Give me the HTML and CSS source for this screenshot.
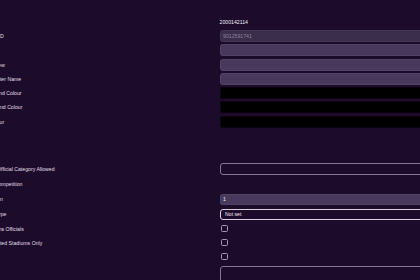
FILE: index.html
```html
<!DOCTYPE html>
<html lang="en">
<head>
    <meta charset="UTF-8">
    <meta name="viewport" content="width=device-width, initial-scale=1.0">
    <title>Edit Fixture</title>
    <link rel="stylesheet" href="styles.css">
</head>
<body>
    <form class="form">
        <!-- Identity -->
        <div class="group">
            <div class="row">
                <span class="label">Game ID</span>
                <span class="value">2000142114</span>
            </div>
            <div class="row">
                <label class="label" for="externalId">External ID</label>
                <input class="field field-muted" id="externalId" placeholder="9012591741">
            </div>
            <div class="row">
                <label class="label" for="name">Name</label>
                <input class="field" id="name">
            </div>
            <div class="row">
                <label class="label" for="view">Match View</label>
                <input class="field" id="view">
            </div>
            <div class="row">
                <label class="label" for="broadcaster">Broadcaster Name</label>
                <input class="field" id="broadcaster">
            </div>
            <div class="row">
                <span class="label">Foreground Colour</span>
                <span class="swatch"></span>
            </div>
            <div class="row">
                <span class="label">Background Colour</span>
                <span class="swatch"></span>
            </div>
            <div class="row">
                <span class="label">Text Colour</span>
                <span class="swatch"></span>
            </div>
        </div>

        <!-- Rules -->
        <div class="group group-rules">
            <div class="row row-tall">
                <label class="label" for="category">Highest Official Category Allowed</label>
                <input class="field field-outline" id="category">
            </div>
            <div class="row">
                <span class="label">Parent Competition</span>
                <span></span>
            </div>
            <div class="row">
                <label class="label" for="relegation">Relegation</label>
                <input class="field" id="relegation" value="1">
            </div>
            <div class="row">
                <label class="label" for="type">Fixture Type</label>
                <select class="field field-select" id="type">
                    <option>Not set</option>
                </select>
            </div>
            <div class="row row-check">
                <label class="label" for="extra">Allow Extra Officials</label>
                <input type="checkbox" class="check" id="extra">
            </div>
            <div class="row row-check">
                <label class="label" for="curated">Use Curated Stadiums Only</label>
                <input type="checkbox" class="check" id="curated">
            </div>
            <div class="row row-check">
                <label class="label" for="active">Active</label>
                <input type="checkbox" class="check" id="active">
            </div>
            <div class="row row-notes">
                <label class="label" for="notes">Notes</label>
                <textarea class="field field-outline" id="notes"></textarea>
            </div>
        </div>
    </form>
</body>
</html>
```

FILE: styles.css
```css
* {
    box-sizing: border-box;
}
body {
    margin: 0;
    background: #1c0b2a;
    font-family: 'Liberation Sans', Arial, sans-serif;
    font-size: 5.2px;
    color: #e6dfee;
    overflow: hidden;
}
.form {
    width: 640px;
    margin-left: -22px;
    padding-top: 15.7px;
}
.group {
    display: flex;
    flex-direction: column;
    gap: 2.3px;
}
.group + .group {
    margin-top: 34.9px;
}
.group-rules {
    gap: 4px;
}
.row {
    display: grid;
    grid-template-columns: 241.5px 1fr;
    align-items: center;
    height: 12px;
}
.group-rules .row {
    height: 11px;
}
.group-rules .row-tall {
    height: 12px;
}
.group-rules .row-check {
    height: 10px;
}
.group-rules .row-notes {
    height: 30px;
    align-items: start;
}
.label {
    white-space: nowrap;
    color: #e2dbea;
}
.value {
    color: #f2edf6;
}
.field {
    width: 100%;
    height: 100%;
    margin: 0;
    padding: 0 2.5px;
    font: inherit;
    color: #eee8f3;
    background: #48395c;
    border: 1px solid #524366;
    border-radius: 2.5px;
    outline: none;
}
.field::placeholder {
    color: #8f83a0;
}
.field-muted {
    background: #3b2d4c;
    border-color: #443657;
}
.field-outline {
    background: transparent;
    border-color: #85759a;
    border-radius: 3px;
    resize: none;
}
.field-select {
    appearance: none;
    background: transparent;
    border-color: #d9cfe3;
    border-radius: 3px;
    padding-left: 4.5px;
}
.swatch {
    display: block;
    height: 100%;
    background: #000;
    border: 1px solid #0b0410;
    border-radius: 1px;
}
.check {
    appearance: none;
    width: 7px;
    height: 7px;
    margin: 0 0 0 1px;
    border: 1px solid #a597b6;
    border-radius: 1.5px;
    background: transparent;
}
```
